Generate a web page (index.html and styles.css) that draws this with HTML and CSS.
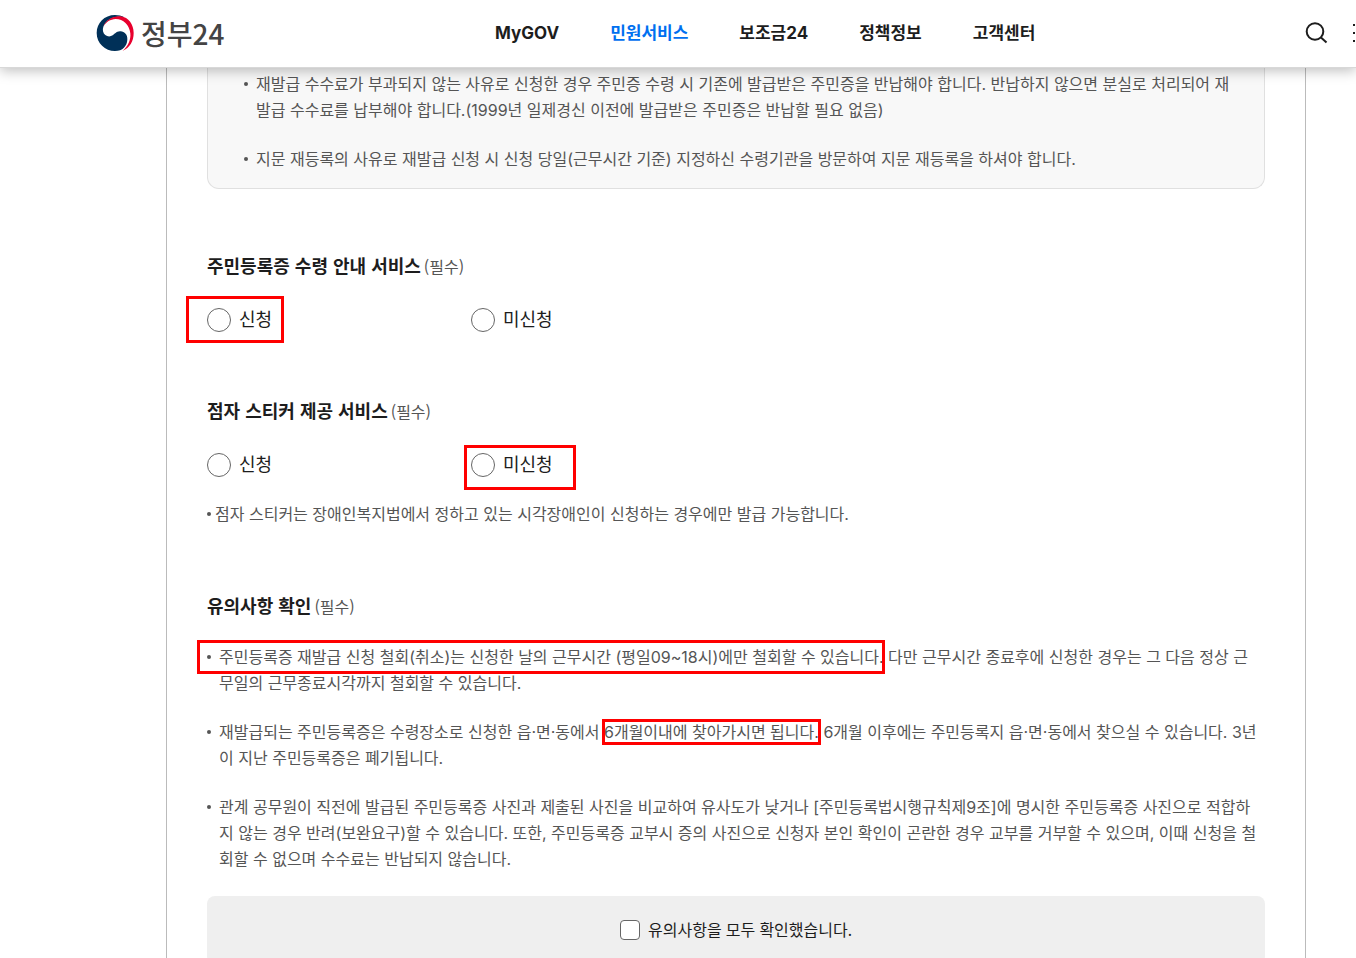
FILE: index.html
```html
<!DOCTYPE html>
<html lang="ko">
<head>
<meta charset="utf-8">
<meta name="viewport" content="width=device-width, initial-scale=1">
<title>정부24</title>
<link rel="stylesheet" href="styles.css">
</head>
<body>
<header class="header">
  <a class="logo" href="#">
    <svg class="logo-mark" viewBox="0 0 114 114" aria-hidden="true">
      <path d="M57 3C25 3 2 27 2 57C2 88 27 111 57 111C80 111 93 96 94 77C95 62 85 51 72 52C60 53 56 60 50 64C40 71 24 67 21 52C18 34 34 13 60 9C68 7 78 8 85 10C77 5 67 3 57 3Z" fill="#003058"/>
      <path d="M22 38C30 17 52 5 74 7C98 10 113 32 113 57C113 83 101 101 80 111C96 96 105 78 103 58C100 32 82 15 59 15C43 16 30 23 22 38Z" fill="#e8002d"/>
    </svg>
    <span class="logo-text">정부24</span>
  </a>
  <nav class="nav">
    <a href="#">MyGOV</a>
    <a class="current" href="#">민원서비스</a>
    <a href="#">보조금24</a>
    <a href="#">정책정보</a>
    <a href="#">고객센터</a>
  </nav>
  <div class="actions">
    <button class="icon-button" type="button" aria-label="검색">
      <svg viewBox="0 0 24 24" aria-hidden="true"><circle cx="11" cy="10.500" r="8.300"/><path d="M17 16.500L22.500 21.500"/></svg>
    </button>
    <button class="icon-button menu" type="button" aria-label="전체메뉴">
      <svg viewBox="0 0 24 24" aria-hidden="true"><path d="M1 4h2M6 4h17M1 12h2M6 12h17M1 20h2M6 20h17"/></svg>
    </button>
  </div>
</header>

<main class="sheet">
  <div class="panel">
    <ul class="notes">
      <li>재발급 수수료가 부과되지 않는 사유로 신청한 경우 주민증 수령 시 기존에 발급받은 주민증을 반납해야 합니다. 반납하지 않으면 분실로 처리되어 재발급 수수료를 납부해야 합니다.(1999년 일제경신 이전에 발급받은 주민증은 반납할 필요 없음)</li>
      <li>지문 재등록의 사유로 재발급 신청 시 신청 당일(근무시간 기준) 지정하신 수령기관을 방문하여 지문 재등록을 하셔야 합니다.</li>
    </ul>
  </div>

  <fieldset class="group">
    <legend class="title">주민등록증 수령 안내 서비스<span class="required">(필수)</span></legend>
    <div class="choices">
      <label class="choice marked marked-first"><input type="radio" name="notice">신청</label>
      <label class="choice"><input type="radio" name="notice">미신청</label>
    </div>
  </fieldset>

  <fieldset class="group">
    <legend class="title">점자 스티커 제공 서비스<span class="required">(필수)</span></legend>
    <div class="choices">
      <label class="choice"><input type="radio" name="braille">신청</label>
      <label class="choice marked marked-second"><input type="radio" name="braille">미신청</label>
    </div>
    <ul class="notes tight">
      <li>점자 스티커는 장애인복지법에서 정하고 있는 시각장애인이 신청하는 경우에만 발급 가능합니다.</li>
    </ul>
  </fieldset>

  <section class="group">
    <h2 class="title">유의사항 확인<span class="required">(필수)</span></h2>
    <ul class="notes cautions">
      <li><span class="marked marked-line">주민등록증 재발급 신청 철회(취소)는 신청한 날의 근무시간 (평일09~18시)에만 철회할 수 있습니다.</span> 다만 근무시간 종료후에 신청한 경우는 그 다음 정상 근무일의 근무종료시각까지 철회할 수 있습니다.</li>
      <li>재발급되는 주민등록증은 수령장소로 신청한 읍·면·동에서 <span class="marked marked-phrase">6개월이내에 찾아가시면 됩니다.</span> 6개월 이후에는 주민등록지 읍·면·동에서 찾으실 수 있습니다. 3년이 지난 주민등록증은 폐기됩니다.</li>
      <li>관계 공무원이 직전에 발급된 주민등록증 사진과 제출된 사진을 비교하여 유사도가 낮거나 [주민등록법시행규칙제9조]에 명시한 주민등록증 사진으로 적합하지 않는 경우 반려(보완요구)할 수 있습니다. 또한, 주민등록증 교부시 증의 사진으로 신청자 본인 확인이 곤란한 경우 교부를 거부할 수 있으며, 이때 신청을 철회할 수 없으며 수수료는 반납되지 않습니다.</li>
    </ul>
    <div class="confirm">
      <label class="check"><input type="checkbox">유의사항을 모두 확인했습니다.</label>
    </div>
  </section>
</main>
</body>
</html>
```
FILE: styles.css
```css
* {
  box-sizing: border-box;
}

body {
  display: flex;
  flex-direction: column;
  height: 100vh;
  margin: 0;
  overflow: hidden;
  background: #fff;
  color: #1d1d1d;
  font-family: "Noto Sans", "Noto Sans CJK KR", sans-serif;
  font-size: 16px;
  line-height: 26px;
}

a {
  color: inherit;
  text-decoration: none;
}

.header {
  position: relative;
  z-index: 1;
  display: flex;
  flex: none;
  align-items: center;
  height: 68px;
  padding: 0 0 2px 96px;
  background: #fff;
  border-bottom: 1px solid #d8d8d8;
  box-shadow: 0 3px 12px rgba(0, 0, 0, 0.25);
}

.logo {
  display: flex;
  align-items: center;
  gap: 7px;
  width: 399px;
  color: #444;
}

.logo-mark {
  width: 38px;
  height: 38px;
}

.logo-text {
  font-family: "Noto Sans CJK KR", sans-serif;
  font-size: 28px;
  font-weight: 500;
  line-height: 36px;
}

.nav {
  display: flex;
  gap: 51px;
  font-family: Inter, "Noto Sans CJK KR", sans-serif;
  font-size: 17px;
  font-weight: 700;
  white-space: nowrap;
}

.nav .current {
  color: #0070f0;
}

.actions {
  display: flex;
  gap: 24px;
  margin-left: auto;
  margin-right: -20px;
}

.icon-button {
  width: 24px;
  height: 24px;
  padding: 0;
  border: 0;
  background: none;
}

.icon-button svg {
  display: block;
  width: 24px;
  height: 24px;
  fill: none;
  stroke: #1d1d1d;
  stroke-width: 2;
}

.sheet {
  flex: 1 0 auto;
  margin: 0 50px 0 166px;
  padding: 0 40px;
  border: solid #bbb;
  border-width: 0 1px;
}

.panel {
  padding: 3px 24px 16px 36px;
  background: #f8f8f8;
  border: 1px solid #e0e0e0;
  border-top: 0;
  border-radius: 0 0 12px 12px;
}

.notes {
  display: flex;
  flex-direction: column;
  gap: 23px;
  margin: 0;
  padding: 0;
  color: #555;
  font-family: Inter, "Noto Sans CJK KR", sans-serif;
  list-style: none;
}

.notes li {
  position: relative;
  padding-left: 12px;
}

.notes li::before {
  content: "";
  position: absolute;
  top: 11px;
  left: 0;
  width: 4px;
  height: 4px;
  border-radius: 50%;
  background: #555;
}

.notes.tight {
  margin-top: 24px;
}

.notes.tight li {
  padding-left: 8px;
}

.group {
  min-width: 0;
  margin: 64px 0 0;
  padding: 0;
  border: 0;
}

.panel + .group {
  margin-top: 62px;
}

.title {
  margin: 0;
  padding: 0;
  font-family: "Noto Sans CJK KR", sans-serif;
  font-size: 18px;
  font-weight: 700;
  line-height: 28px;
}

.required {
  margin-left: 3px;
  color: #555;
  font-size: 16px;
  font-weight: 400;
}

.choices {
  display: grid;
  grid-template-columns: 264px 264px;
  margin-top: 28px;
}

.choice {
  display: flex;
  align-items: flex-start;
  justify-self: start;
  gap: 8px;
  font-size: 18px;
  line-height: 22px;
}

.choice input {
  appearance: none;
  width: 24px;
  height: 24px;
  margin: 0;
  border: 1px solid #666;
  border-radius: 50%;
  background: #fff;
}

.choice input:checked {
  border: 7px solid #0070f0;
}

.cautions {
  margin-top: 24px;
  padding-right: 5px;
}

.marked {
  position: relative;
}

.marked::after {
  content: "";
  position: absolute;
  border: 3px solid #f00;
  pointer-events: none;
}

.marked-first::after {
  inset: -12px -12px -11px -21px;
}

.marked-second::after {
  inset: -8px -23px -13px -7px;
}

.marked-line::after {
  inset: -7px -1px -7px -22px;
}

.marked-phrase::after {
  inset: -3px -2px;
}

.confirm {
  display: flex;
  justify-content: center;
  margin-top: 24px;
  padding: 21px;
  background: #efefef;
  border-radius: 8px;
}

.check {
  display: flex;
  align-items: center;
  gap: 8px;
}

.check input {
  appearance: none;
  width: 20px;
  height: 20px;
  margin: 0;
  border: 1px solid #666;
  border-radius: 4px;
  background: #fff;
}

.check input:checked {
  background: #0070f0;
}
```
